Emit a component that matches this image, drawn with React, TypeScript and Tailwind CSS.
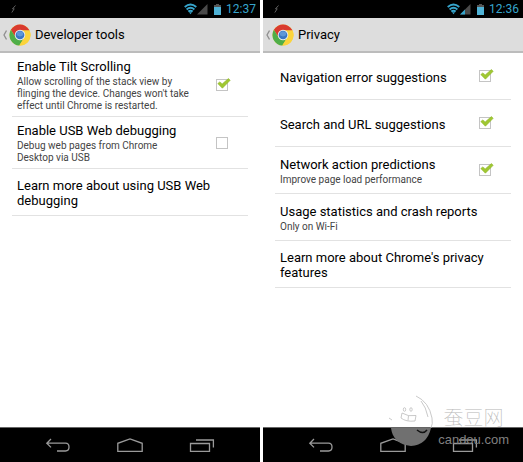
import type { ReactNode } from "react";

type Setting = {
  id: string;
  title: string;
  summary?: string;
  checked?: boolean;
};

const developerSettings: Setting[] = [
  {
    id: "tilt-scrolling",
    title: "Enable Tilt Scrolling",
    summary:
      "Allow scrolling of the stack view by flinging the device. Changes won't take effect until Chrome is restarted.",
    checked: true,
  },
  {
    id: "usb-debugging",
    title: "Enable USB Web debugging",
    summary: "Debug web pages from Chrome Desktop via USB",
    checked: false,
  },
  { id: "usb-learn-more", title: "Learn more about using USB Web debugging" },
];

const privacySettings: Setting[] = [
  { id: "navigation-errors", title: "Navigation error suggestions", checked: true },
  { id: "search-suggestions", title: "Search and URL suggestions", checked: true },
  {
    id: "network-predictions",
    title: "Network action predictions",
    summary: "Improve page load performance",
    checked: true,
  },
  { id: "crash-reports", title: "Usage statistics and crash reports", summary: "Only on Wi-Fi" },
  { id: "privacy-learn-more", title: "Learn more about Chrome's privacy features" },
];

function ChromeLogo() {
  return (
    <svg viewBox="0 0 48 48" className="size-[22px] shrink-0" aria-hidden="true">
      <circle cx="24" cy="24" r="23" fill="#fbd43c" />
      <path d="M4.1 12.5A23 23 0 0 1 43.9 12.5L44.4 14H24L14.5 29.5Z" fill="#d93a2f" />
      <path d="M4.1 12.5A23 23 0 0 0 22.5 47L33.5 29.5L14.5 29.5Z" fill="#4fae48" />
      <path d="M24 14H44.7A23 23 0 0 1 22.5 47L33.5 29.5Z" fill="#fbd43c" />
      <circle cx="24" cy="24" r="11.5" fill="#e9edf2" />
      <circle cx="24" cy="24" r="9.5" fill="#3a76c4" />
      <ellipse cx="24" cy="21.5" rx="7" ry="5.5" fill="#5f97d8" />
    </svg>
  );
}

function StatusBar({ time, signal }: { time: string; signal: number }) {
  return (
    <div className="flex h-[18px] items-center bg-black pr-1 pl-[11px] text-[#36a5cc]">
      <svg viewBox="0 0 5 8" className="h-2 w-[5px]" aria-hidden="true">
        <path d="M4.5 .5L1.5 3.8H3.2L.8 7.5" fill="none" stroke="#777" strokeWidth=".8" />
      </svg>
      <svg viewBox="0 0 24 12" className="ml-auto h-3 w-6" aria-hidden="true">
        <g fill="none" stroke="#36a5cc" strokeWidth="1.9">
          <path d="M.7 4Q6.5 -.8 12.3 4" />
          <path d="M2.6 6.4Q6.5 3.2 10.4 6.4" />
          <path d="M4.3 8.6Q6.5 6.9 8.7 8.6" />
        </g>
        <path d="M5 9.2H8L6.5 11.3Z" fill="#36a5cc" />
        <path d="M13 11.5L23.5 1V11.5Z" fill="#4a4a4a" />
        <path d={`M13 11.5L${13 + signal} ${11.5 - signal}V11.5Z`} fill="#36a5cc" />
      </svg>
      <svg viewBox="0 0 7 11" className="ml-[6px] h-[11px] w-[7px]" aria-hidden="true">
        <path d="M2 0H5V1H7V4H0V1H2Z" fill="#555" />
        <path d="M0 3H7V11H0Z" fill="#4fb2d6" />
      </svg>
      <span className="ml-[5px] text-xs">{time}</span>
    </div>
  );
}

function ActionBar({ title }: { title: string }) {
  return (
    <header className="flex h-[35px] items-center border-b-2 border-[#bcbcbc] bg-[#dddddd] pt-px pl-[3px]">
      <button type="button" aria-label="Navigate up" className="flex items-center gap-[2px]">
        <svg viewBox="0 0 4 10" className="h-[10px] w-1" aria-hidden="true">
          <path d="M3.5 .5L1 5L3.5 9.5" fill="none" stroke="#8f8f8f" strokeWidth="1.3" />
        </svg>
        <ChromeLogo />
      </button>
      <h1 className="ml-1 text-[13px]">{title}</h1>
    </header>
  );
}

function CheckBox({ id, defaultChecked }: { id: string; defaultChecked: boolean }) {
  return (
    <span className="relative mr-5 size-3 shrink-0">
      <input
        id={id}
        type="checkbox"
        defaultChecked={defaultChecked}
        className="peer block size-3 appearance-none border border-[#c4c4c4] bg-white"
      />
      <svg
        viewBox="0 0 14 12"
        className="pointer-events-none absolute -top-px left-px hidden h-3 w-[14px] peer-checked:block"
        aria-hidden="true"
      >
        <path
          d="M.8 5.6L2.8 3.9L5.2 5.9L11.4 .6L13.2 2.3L5.4 10.2Z"
          fill="#a0c832"
          stroke="#8fb52a"
          strokeWidth=".6"
          strokeLinejoin="round"
        />
      </svg>
    </span>
  );
}

function SettingRow({ setting }: { setting: Setting }) {
  const text = (
    <>
      <span className="block text-[13px] leading-[15px]">{setting.title}</span>
      {setting.summary && (
        <span className="mt-[2px] block text-[10px] leading-3 text-[#444]">{setting.summary}</span>
      )}
    </>
  );

  return (
    <li className="flex min-h-[47px] items-center border-b border-[#e2e2e2] py-1 pl-[5px]">
      {setting.checked === undefined ? (
        <a href={`#${setting.id}`} className="flex-1 pt-[2px] pr-5">
          {text}
        </a>
      ) : (
        <>
          <label htmlFor={setting.id} className="flex-1 pt-[2px] pr-5">
            {text}
          </label>
          <CheckBox id={setting.id} defaultChecked={setting.checked} />
        </>
      )}
    </li>
  );
}

function NavButton({ label, children }: { label: string; children: ReactNode }) {
  return (
    <button type="button" aria-label={label}>
      <svg
        viewBox="0 0 26 16"
        className="h-4 w-[26px]"
        fill="none"
        stroke="#9a9a9a"
        strokeWidth="1.3"
        aria-hidden="true"
      >
        {children}
      </svg>
    </button>
  );
}

function NavBar() {
  return (
    <nav className="flex h-[35px] items-center justify-between border-t border-[#666] bg-black px-[45px] pt-[2px]">
      <NavButton label="Back">
        <path d="M6 1L1.8 5.2L6 9.4M1.8 5.2H20.5Q24 5.2 24 9.1Q24 13 20.5 13H12" />
      </NavButton>
      <NavButton label="Home">
        <path d="M.8 13.3V5.3L13 1L25.2 5.3V13.3Z" />
      </NavButton>
      <NavButton label="Recent apps">
        <path d="M1.5 5.5H20.5V13.3H1.5ZM7 2H24.4V9.5" />
      </NavButton>
    </nav>
  );
}

function Phone({
  time,
  signal,
  title,
  settings,
}: {
  time: string;
  signal: number;
  title: string;
  settings: Setting[];
}) {
  return (
    <section className="flex flex-1 flex-col">
      <StatusBar time={time} signal={signal} />
      <ActionBar title={title} />
      <ul className="flex-1 px-3">
        {settings.map((setting) => (
          <SettingRow key={setting.id} setting={setting} />
        ))}
      </ul>
      <NavBar />
    </section>
  );
}

function Watermark() {
  return (
    <div className="pointer-events-none absolute right-[14px] bottom-[14px] flex items-end gap-1">
      <svg viewBox="0 0 46 54" className="h-[54px] w-[46px]" fill="none" aria-hidden="true">
        <path d="M3 34H43Q39 51 23 52Q5 50 3 34Z" fill="#707070" />
        <g stroke="#bbb" strokeWidth=".8">
          <path d="M28 2Q41 8 44 24Q45 30 43 34" />
          <path d="M33 7Q38 13 40 23M1 24L4 26" />
          <ellipse cx="16.5" cy="15.5" rx="1.2" ry="1.8" />
          <ellipse cx="23" cy="15.5" rx="1.2" ry="1.8" />
          <path d="M14 19Q20 23 28 21.5L27 27Q18 28 13 24ZM20.5 21.5L20 26.5" />
        </g>
        <path d="M29 36Q35 41 39 36" stroke="#111" strokeWidth="1.5" />
      </svg>
      <div className="flex flex-col items-center">
        <span className="font-['Noto_Sans_CJK_SC',sans-serif] text-xl leading-[30px] font-thin text-[#b8b8b8]">
          蚕豆网
        </span>
        <span className="font-['Liberation_Sans',sans-serif] text-[13px] leading-4 text-[#808080]">
          candou.com
        </span>
      </div>
    </div>
  );
}

export default function App() {
  return (
    <main className="relative flex min-h-screen gap-[3px] bg-white font-[Roboto,sans-serif] text-black">
      <Phone time="12:37" signal={0} title="Developer tools" settings={developerSettings} />
      <Phone time="12:36" signal={5} title="Privacy" settings={privacySettings} />
      <Watermark />
    </main>
  );
}
